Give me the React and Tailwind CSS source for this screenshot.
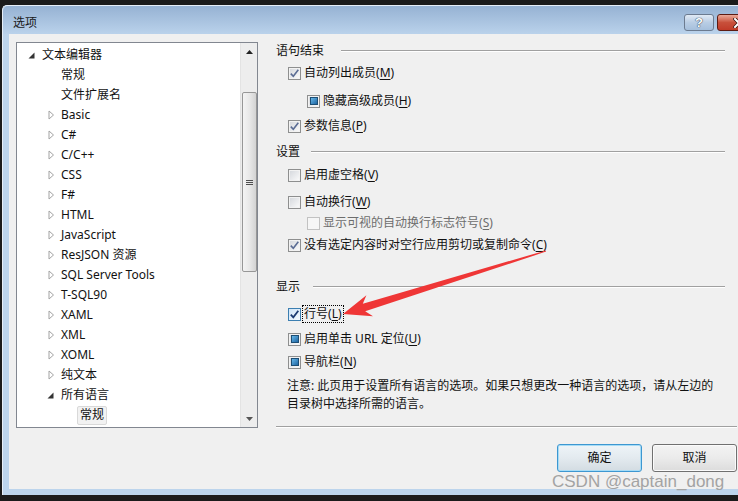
import React from 'react'

// 树形列表的数据：lv 为缩进层级，arrow 为展开/折叠三角
const TREE = [
  { lv: 0, arrow: 'open', t: '文本编辑器' },
  { lv: 1, t: '常规' },
  { lv: 1, t: '文件扩展名' },
  { lv: 1, arrow: 'closed', t: 'Basic' },
  { lv: 1, arrow: 'closed', t: 'C#' },
  { lv: 1, arrow: 'closed', t: 'C/C++' },
  { lv: 1, arrow: 'closed', t: 'CSS' },
  { lv: 1, arrow: 'closed', t: 'F#' },
  { lv: 1, arrow: 'closed', t: 'HTML' },
  { lv: 1, arrow: 'closed', t: 'JavaScript' },
  { lv: 1, arrow: 'closed', t: 'ResJSON 资源' },
  { lv: 1, arrow: 'closed', t: 'SQL Server Tools' },
  { lv: 1, arrow: 'closed', t: 'T-SQL90' },
  { lv: 1, arrow: 'closed', t: 'XAML' },
  { lv: 1, arrow: 'closed', t: 'XML' },
  { lv: 1, arrow: 'closed', t: 'XOML' },
  { lv: 1, arrow: 'closed', t: '纯文本' },
  { lv: 1, arrow: 'open', t: '所有语言' },
  { lv: 2, t: '常规', sel: true },
]

const INDENT = { 0: 'pl-[11px]', 1: 'pl-[30px]', 2: 'pl-[49px]' }

function Arrow({ kind }) {
  if (kind === 'open') {
    return (
      <svg width="7" height="7" viewBox="0 0 7 7" className="mt-[1px]">
        <path d="M6.5 0.5 L6.5 6.5 L0.5 6.5 Z" fill="#333" />
      </svg>
    )
  }
  if (kind === 'closed') {
    return (
      <svg width="7" height="10" viewBox="0 0 7 10" className="ml-[1px]">
        <path d="M1 1 L5.5 5 L1 9 Z" fill="#fff" stroke="#a3a3a3" strokeWidth="1" />
      </svg>
    )
  }
  return null
}

function TreeRow({ row }) {
  return (
    <div className={`flex h-[20px] items-center ${INDENT[row.lv]}`}>
      <span className="flex w-[14px] flex-none items-center">
        <Arrow kind={row.arrow} />
      </span>
      {row.sel ? (
        <span className="-ml-[3px] flex h-[19px] items-center rounded-[2px] border border-[#d9d9d9] bg-[#f2f2f2] px-[2px]">
          {row.t}
        </span>
      ) : (
        <span className="whitespace-nowrap">{row.t}</span>
      )}
    </div>
  )
}

function ScrollBar() {
  return (
    <div className="flex w-[17px] flex-none flex-col border-l border-[#e3e3e3] bg-[#ededed]">
      <div className="flex h-[17px] items-center justify-center">
        <svg width="7" height="4" viewBox="0 0 7 4">
          <path d="M0 4 L3.5 0 L7 4 Z" fill="#222" />
        </svg>
      </div>
      <div className="flex-1">
        <div className="mx-auto mt-[32px] flex h-[180px] w-[15px] items-center justify-center rounded-[2px] border border-[#979797] bg-gradient-to-r from-[#f4f4f4] via-[#e8e8e8] to-[#d3d3d3]">
          <div className="flex flex-col gap-[1px]">
            <span className="h-[1px] w-[7px] bg-[#4f4f4f]" />
            <span className="h-[1px] w-[7px] bg-[#4f4f4f]" />
            <span className="h-[1px] w-[7px] bg-[#4f4f4f]" />
          </div>
        </div>
      </div>
      <div className="flex h-[17px] items-center justify-center">
        <svg width="7" height="4" viewBox="0 0 7 4">
          <path d="M0 0 L7 0 L3.5 4 Z" fill="#555" />
        </svg>
      </div>
    </div>
  )
}

function Box({ kind }) {
  if (kind === 'disabled') {
    return <span className="h-[13px] w-[13px] flex-none border border-[#c2c2c2] bg-[#f6f6f6]" />
  }
  if (kind === 'focus') {
    return (
      <span className="flex h-[13px] w-[13px] flex-none items-center justify-center border border-[#3c7fb1] bg-gradient-to-br from-[#cfe4f8] to-[#f4f9fe]">
        <svg width="11" height="11" viewBox="0 0 11 11">
          <path d="M1.8 5.6 L4.3 8.3 L9.3 1.8" fill="none" stroke="#1b3a72" strokeWidth="1.8" />
        </svg>
      </span>
    )
  }
  return (
    <span className="flex h-[13px] w-[13px] flex-none items-center justify-center border border-[#8e8f8f] bg-gradient-to-br from-[#d3d6db] to-[#fcfcfc] shadow-[inset_0_0_0_1px_#f2f2f2]">
      {kind === 'checked' && (
        <svg width="11" height="11" viewBox="0 0 11 11">
          <path d="M1.8 5.6 L4.3 8.3 L9.3 1.8" fill="none" stroke="#5a6c94" strokeWidth="1.6" />
        </svg>
      )}
      {kind === 'square' && (
        <span className="h-[8px] w-[8px] border border-[#1d4e74] bg-gradient-to-br from-[#67b8ea] to-[#1d66a2]" />
      )}
    </span>
  )
}

function Label({ text, k }) {
  return (
    <>
      {text}(<span className="underline underline-offset-[2px]">{k}</span>)
    </>
  )
}

function Option({ kind, text, k, sub, mt, focus }) {
  const disabled = kind === 'disabled'
  return (
    <div className={`flex h-[20px] items-center ${sub ? 'pl-[31px]' : 'pl-[12px]'} ${mt}`}>
      <Box kind={kind} />
      {focus ? (
        <span className="ml-[1px] flex h-[18px] items-center border border-dotted border-black px-[1px]">
          <Label text={text} k={k} />
        </span>
      ) : (
        <span className={`ml-[3px] whitespace-nowrap ${disabled ? 'text-[#6d6d6d]' : ''}`}>
          <Label text={text} k={k} />
        </span>
      )}
    </div>
  )
}

function Header({ text, gap, mt }) {
  return (
    <div className={`flex h-[20px] items-center ${mt}`}>
      <span>{text}</span>
      <span className={`mr-[12px] h-[2px] flex-1 border-t border-b border-t-[#a0a0a0] border-b-white ${gap}`} />
    </div>
  )
}

export default function App() {
  return (
    <div className="relative h-[501px] w-[738px] overflow-hidden bg-[#1b1b1b] pl-[2px] pt-[5px] font-['Noto_Sans','Noto_Sans_CJK_SC',sans-serif] text-[12px] leading-none text-[#111]">
      <div className="flex h-[490px] w-[760px] flex-col rounded-tl-[5px] border-l border-t border-[#e6eef7] bg-[#bcd4ec]">
        {/* 标题栏 */}
        <div className="flex h-[28px] flex-none items-start rounded-tl-[5px] bg-gradient-to-b from-[#96b2d3] to-[#bad2eb]">
          <span className="ml-[10px] mt-[10px] leading-[14px] text-[#1a1a1a]">选项</span>
          <div className="ml-auto mt-[8px] flex gap-[3px] pr-[2px]">
            <div className="flex h-[17px] w-[30px] items-center justify-center rounded-[3px] border border-[#6c7b90] bg-gradient-to-b from-[#e1eaf5] via-[#b9cde4] to-[#a5bfdc]">
              <span className="font-['Liberation_Sans',sans-serif] text-[13px] font-bold leading-none text-white [text-shadow:0_0_1px_#23324a,0_0_1px_#23324a]">?</span>
            </div>
            <div className="flex h-[17px] w-[43px] items-center justify-center rounded-[3px] border border-[#5d1b12] bg-gradient-to-b from-[#e9a898] via-[#c8503b] to-[#c03a28]">
              <svg width="12" height="10" viewBox="0 0 12 10">
                <path d="M2 1 L10 9 M10 1 L2 9" stroke="#3a1410" strokeWidth="3.6" strokeLinecap="square" />
                <path d="M2 1 L10 9 M10 1 L2 9" stroke="#fff" strokeWidth="2" strokeLinecap="square" />
              </svg>
            </div>
          </div>
        </div>

        {/* 客户区 */}
        <div className="flex flex-1 pb-[6px] pl-[6px]">
          <div className="flex flex-1 bg-[#f0f0f0] pl-[7px] pt-[8px]">
            <div className="flex h-[386px] w-[242px] flex-none border border-[#828790] bg-white">
              <div className="flex-1 overflow-hidden pt-[2px]">
                {TREE.map((row, i) => (
                  <TreeRow key={i} row={row} />
                ))}
              </div>
              <ScrollBar />
            </div>

            <div className="ml-[18px] -mt-[1px] flex w-[461px] flex-none flex-col">
              <Header text="语句结束" gap="ml-[17px]" mt="" />
              <Option kind="checked" text="自动列出成员" k="M" mt="mt-[2px]" />
              <Option kind="square" text="隐藏高级成员" k="H" sub mt="mt-[8px]" />
              <Option kind="checked" text="参数信息" k="P" mt="mt-[5px]" />
              <Header text="设置" gap="ml-[11px]" mt="mt-[6px]" />
              <Option kind="unchecked" text="启用虚空格" k="V" mt="mt-[3px]" />
              <Option kind="unchecked" text="自动换行" k="W" mt="mt-[7px]" />
              <Option kind="disabled" text="显示可视的自动换行标志符号" k="S" sub mt="mt-[1px]" />
              <Option kind="checked" text="没有选定内容时对空行应用剪切或复制命令" k="C" mt="mt-[2px]" />
              <Header text="显示" gap="ml-[13px]" mt="mt-[22px]" />
              <Option kind="focus" text="行号" k="L" focus mt="mt-[7px]" />
              <Option kind="square" text="启用单击 URL 定位" k="U" mt="mt-[5px]" />
              <Option kind="square" text="导航栏" k="N" mt="mt-[3px]" />
              <p className="mt-[5px] whitespace-nowrap pl-[11px] leading-[18px]">
                注意: 此页用于设置所有语言的选项。如果只想更改一种语言的选项，请从左边的
                <br />
                目录树中选择所需的语言。
              </p>
              <div className="mt-[13px] h-[2px] border-t border-b border-t-[#a0a0a0] border-b-white" />
              <div className="mt-[16px] flex justify-end gap-[10px]">
                <button
                  type="button"
                  className="flex h-[28px] w-[85px] items-center justify-center rounded-[3px] border border-[#3d97d1] bg-gradient-to-b from-[#eef4f8] via-[#e3eaef] to-[#d3dce2] shadow-[inset_0_0_0_1px_#a6dcf6]"
                >
                  确定
                </button>
                <button
                  type="button"
                  className="flex h-[28px] w-[85px] items-center justify-center rounded-[3px] border border-[#707070] bg-gradient-to-b from-[#f3f3f3] via-[#ebebeb] to-[#dcdcdc] shadow-[inset_0_0_0_1px_#fbfbfb]"
                >
                  取消
                </button>
              </div>
            </div>
          </div>
        </div>
      </div>

      {/* 红色标注箭头 */}
      <svg className="pointer-events-none absolute left-0 top-0" width="738" height="501" viewBox="0 0 738 501">
        <polygon
          points="343,314 373,316.2 365.2,311.3 546.1,251.6 545.9,250.4 362.8,303.7 366.4,295.2"
          fill="#ef3636"
        />
      </svg>

      {/* 水印 */}
      <span className="absolute left-[552px] top-[472px] font-['Liberation_Sans',sans-serif] text-[17px] leading-[20px] text-[#a3a3a3]">
        CSDN @captain_dong
      </span>
    </div>
  )
}
